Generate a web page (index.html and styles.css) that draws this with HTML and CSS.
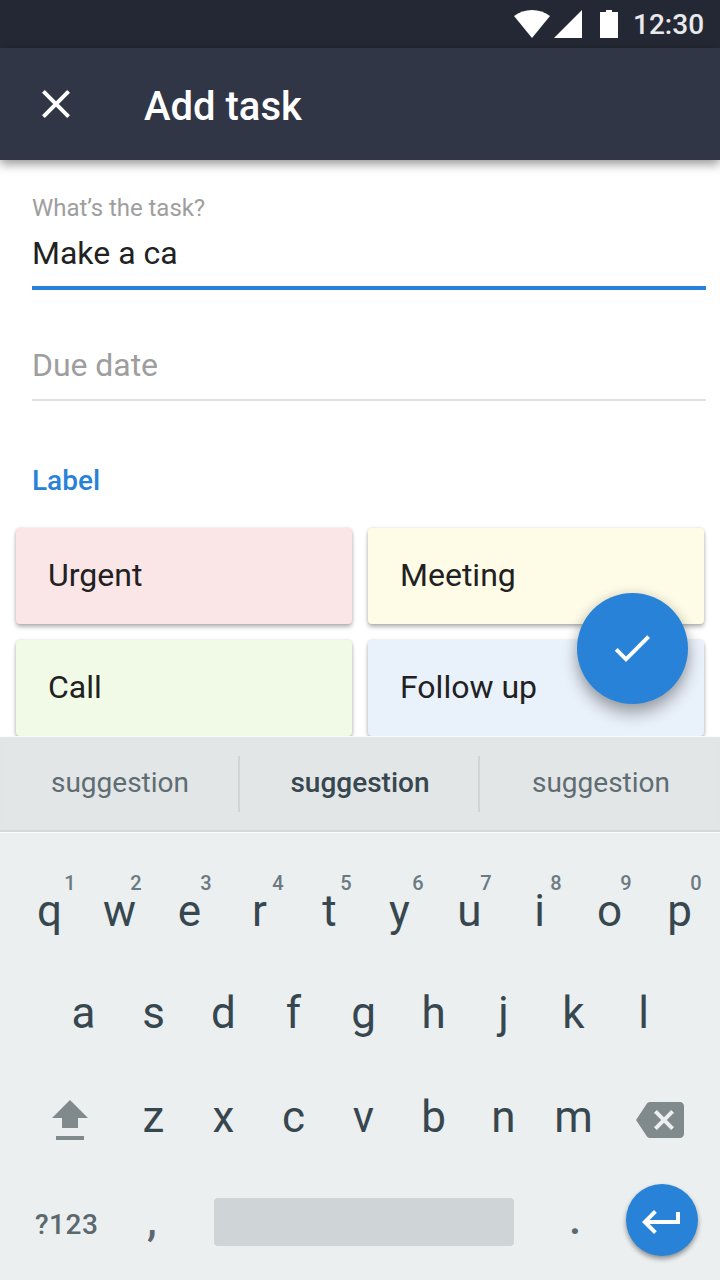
FILE: index.html
```html
<!DOCTYPE html>
<html lang="en">
<head>
<meta charset="utf-8">
<title>Add task</title>
<link rel="stylesheet" href="styles.css">
</head>
<body>
<div class="screen">
  <header class="statusbar">
    <svg class="wifi" width="36" height="28" viewBox="0 0 36 28"><path d="M18 28 0 6C10-2 26-2 36 6Z"/></svg>
    <svg class="signal" width="28" height="28" viewBox="0 0 28 28"><path d="M0 28H28V0Z"/></svg>
    <svg class="battery" width="18" height="28" viewBox="0 0 18 28"><path d="M6 0h6v2h6v26H0V2h6Z"/></svg>
    <span class="clock">12:30</span>
  </header>
  <nav class="appbar">
    <svg class="close" width="48" height="48" viewBox="0 0 24 24"><path d="M19 6.41 17.59 5 12 10.59 6.41 5 5 6.41 10.59 12 5 17.59 6.41 19 12 13.41 17.59 19 19 17.59 13.41 12z"/></svg>
    <h1 class="title">Add task</h1>
  </nav>
  <main class="content">
    <div class="field field-active">
      <div class="hint">What’s the task?</div>
      <div class="value">Make a ca</div>
    </div>
    <div class="field field-empty"><div class="placeholder">Due date</div></div>
    <h2 class="section">Label</h2>
    <div class="labels">
      <div class="card urgent">Urgent</div>
      <div class="card meeting">Meeting</div>
      <div class="card call">Call</div>
      <div class="card followup">Follow up</div>
    </div>
    <button class="fab"><svg width="48" height="48" viewBox="0 0 24 24"><path d="M9 16.2 4.8 12l-1.4 1.4L9 19 21 7l-1.4-1.4z"/></svg></button>
  </main>
  <section class="keyboard">
    <div class="suggestions">
      <span class="suggestion">suggestion</span>
      <span class="suggestion primary">suggestion</span>
      <span class="suggestion">suggestion</span>
    </div>
    <div class="row row-top">
      <span class="key">q<sup class="num num-one">1</sup></span><span class="key">w<sup class="num">2</sup></span><span class="key">e<sup class="num">3</sup></span><span class="key">r<sup class="num num-far">4</sup></span><span class="key">t<sup class="num">5</sup></span><span class="key">y<sup class="num num-far">6</sup></span><span class="key">u<sup class="num">7</sup></span><span class="key">i<sup class="num">8</sup></span><span class="key">o<sup class="num">9</sup></span><span class="key">p<sup class="num">0</sup></span>
    </div>
    <div class="row row-home">
      <span class="key">a</span><span class="key">s</span><span class="key">d</span><span class="key">f</span><span class="key">g</span><span class="key">h</span><span class="key">j</span><span class="key">k</span><span class="key">l</span>
    </div>
    <div class="row row-bottom">
      <svg class="shift" width="36" height="40" viewBox="0 0 36 40"><path d="M18 0 36 18H26V28H10V18H0ZM4 36H32V40H4Z"/></svg>
      <span class="key">z</span><span class="key">x</span><span class="key">c</span><span class="key">v</span><span class="key">b</span><span class="key">n</span><span class="key">m</span>
      <svg class="backspace" width="48" height="48" viewBox="0 0 24 24"><path d="M22 3H7c-.69 0-1.23.35-1.59.88L0 12l5.41 8.11c.36.53.9.89 1.59.89h15c1.1 0 2-.9 2-2V5c0-1.1-.9-2-2-2zm-3 12.59L17.59 17 14 13.41 10.41 17 9 15.59 12.59 12 9 8.41 10.41 7 14 10.59 17.59 7 19 8.41 15.41 12 19 15.59z"/></svg>
    </div>
    <div class="row row-space">
      <span class="symbols">?123</span>
      <span class="punct">,</span>
      <span class="space"></span>
      <span class="punct dot">.</span>
      <span class="enter"><svg width="48" height="48" viewBox="0 0 24 24"><path d="M19 7v4H5.83l3.58-3.59L8 6l-6 6 6 6 1.41-1.41L5.83 13H21V7z"/></svg></span>
    </div>
  </section>
</div>
</body>
</html>
```
FILE: styles.css
```css
* { box-sizing: border-box; }

body {
  margin: 0;
  font-family: Roboto, "Liberation Sans", sans-serif;
  color: #212121;
}

svg { display: block; flex: none; fill: #fff; }

.screen {
  display: flex;
  flex-direction: column;
  width: 720px;
  height: 1280px;
  overflow: hidden;
  background: #fff;
}

.statusbar {
  display: flex;
  flex: none;
  justify-content: flex-end;
  height: 48px;
  padding: 10px 16px 0 0;
  background: #242834;
}

.signal { margin-left: 4px; }
.battery { margin-left: 18px; }

.clock {
  width: 71px;
  margin-left: 15px;
  color: #e9e9eb;
  font-size: 28px;
  font-weight: 500;
  line-height: 30px;
  white-space: nowrap;
}

.appbar {
  display: flex;
  flex: none;
  position: relative;
  height: 112px;
  padding: 32px 32px 0;
  background: #303646;
  box-shadow: 0 4px 10px rgba(0, 0, 0, .42);
}

.title {
  margin: 0 0 0 64px;
  color: #fff;
  font-size: 40px;
  font-weight: 500;
  line-height: 54px;
}

.content {
  flex: none;
  position: relative;
  height: 576px;
  overflow: hidden;
  padding: 32px 16px 0;
}

.field { margin-left: 16px; width: 674px; }

.field-active {
  height: 98px;
  border-bottom: 4px solid #2882d8;
}

.hint {
  color: #9e9e9e;
  font-size: 24px;
  line-height: 32px;
  letter-spacing: -.04px;
}

.value { font-size: 32px; line-height: 58px; }

.field-empty {
  height: 111px;
  padding-top: 54px;
  border-bottom: 2px solid #e0e0e0;
}

.placeholder {
  color: #9e9e9e;
  font-size: 32px;
  line-height: 42px;
  letter-spacing: -.05px;
}

.section {
  margin: 60px 0 0 16px;
  color: #2882d8;
  font-size: 28px;
  font-weight: 500;
  line-height: 40px;
}

.labels {
  display: grid;
  grid-template-columns: 336px 336px;
  grid-auto-rows: 96px;
  gap: 16px;
  margin-top: 27px;
}

.card {
  padding-left: 32px;
  border-radius: 4px;
  font-size: 32px;
  line-height: 94px;
  box-shadow: 0 3px 4px rgba(0, 0, 0, .28), 0 0 3px rgba(0, 0, 0, .12);
}

.urgent { background: #fae5e7; }
.meeting { background: #fefbe7; }
.call { background: #f1fae7; }
.followup { background: #e9f1fb; }

.fab {
  position: absolute;
  right: 32.5px;
  bottom: 32.5px;
  width: 111px;
  height: 111px;
  padding: 31.5px;
  border: 0;
  border-radius: 50%;
  background: #2882d8;
  box-shadow: 0 10px 16px rgba(0, 0, 0, .3), 0 0 12px rgba(0, 0, 0, .12);
}

.keyboard {
  flex: none;
  height: 544px;
  background: #ebeff0;
  color: #37474f;
}

.suggestions {
  display: grid;
  grid-template-columns: repeat(3, 240px);
  height: 97px;
  padding-top: 19px;
  border-top: 1px solid #fafbfb;
  border-bottom: 1px solid #fafbfb;
  background: #e2e6e7;
  box-shadow: inset 0 -2px 1px rgba(0, 0, 0, .06);
}

.suggestion {
  height: 56px;
  padding-left: 2px;
  border-right: 2px solid #cfd4d6;
  color: #5f6c72;
  font-size: 28px;
  line-height: 54px;
  text-align: center;
}

.suggestion:last-child { padding-left: 4px; border-right-color: transparent; }
.primary { color: #37474f; font-weight: 500; }

.row { display: flex; }
.row-top { height: 102px; padding: 48px 0 0 14.5px; }
.row-home { height: 103px; padding: 48px 0 0 48.5px; }
.row-bottom { height: 103px; padding: 49px 0 0 52px; }
.row-space { height: 139px; padding: 43px 0 0 35px; }

.key {
  position: relative;
  width: 70px;
  font-size: 44px;
  line-height: 60px;
  text-align: center;
}

.num {
  position: absolute;
  top: -10px;
  left: 41.5px;
  width: 20px;
  color: #6b7a82;
  font-size: 20px;
  font-weight: 500;
  line-height: 24px;
}

.num-one { left: 45.5px; }
.num-far { left: 43.5px; }

.shift { margin: 13px 30.5px 0 0; fill: #80898c; }
.backspace { margin: 9px 0 0 27.5px; fill: #80898c; }

.symbols {
  width: 100px;
  padding-top: 11px;
  color: #5b686e;
  font-size: 28px;
  font-weight: 500;
  line-height: 60px;
  letter-spacing: .5px;
}

.punct {
  width: 34px;
  padding-top: 12px;
  color: #5b686e;
  font-size: 44px;
  font-weight: 500;
  line-height: 48px;
  text-align: center;
}

.dot { padding-top: 11px; }

.space {
  width: 300px;
  height: 48px;
  margin: 14px 44px 0 45px;
  border-radius: 4px;
  background: #cfd4d6;
}

.enter {
  width: 72px;
  height: 72px;
  margin-left: 34px;
  padding: 14px 0 0 12px;
  border-radius: 50%;
  background: #2882d8;
  box-shadow: 0 3px 5px rgba(0, 0, 0, .4);
}
```
